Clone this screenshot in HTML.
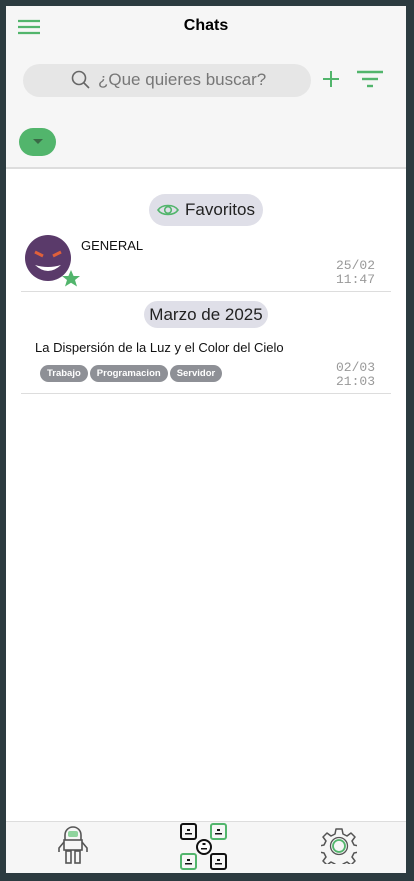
<!DOCTYPE html>
<html><head><meta charset="utf-8"><style>
*{box-sizing:border-box;margin:0;padding:0}
body{width:414px;height:881px;background:#2c3b40;font-family:"Liberation Sans",sans-serif;position:relative;overflow:hidden}
.app{position:absolute;left:6px;top:6px;width:400px;height:867px;background:#fff}
.hdr{position:absolute;left:0;top:0;width:400px;height:163px;background:#f6f6f6;border-bottom:2px solid #ddd}
.abs{position:absolute}
.pill{position:absolute;background:#dfdfe8;border-radius:16px;color:#222;font-size:17px;display:flex;align-items:center;justify-content:center}
.tag{display:inline-block;background:#8e9096;color:#fff;font-size:9.5px;font-weight:bold;border-radius:9px;padding:3px 7px;margin-right:2px}
.time{position:absolute;font-family:"Liberation Mono",monospace;font-size:13px;color:#999;line-height:14px;text-align:left}
.line{position:absolute;left:15px;width:370px;height:1px;background:#ddd}
.nav{position:absolute;left:0;top:815px;width:400px;height:52px;background:#f6f6f6;border-top:1px solid #ddd}
</style></head><body><div class="app">
<div class="hdr">
<svg class="abs" style="left:12px;top:13px" width="22" height="16"><g stroke="#52b56c" stroke-width="2.2"><line x1="0" y1="2" x2="22" y2="2"/><line x1="0" y1="8" x2="22" y2="8"/><line x1="0" y1="14" x2="22" y2="14"/></g></svg>
<div class="abs" style="left:0;width:400px;top:11px;text-align:center;font-weight:bold;font-size:16px;color:#000">Chats</div>
<div class="abs" style="left:17px;top:58px;width:288px;height:33px;background:#e6e6e6;border-radius:17px"></div>
<svg class="abs" style="left:65px;top:64px" width="20" height="20"><circle cx="8" cy="8" r="6.5" fill="none" stroke="#666" stroke-width="1.6"/><line x1="13" y1="13" x2="18" y2="18" stroke="#666" stroke-width="1.6"/></svg>
<div class="abs" style="left:92px;top:64px;font-size:17px;color:#777">¿Que quieres buscar?</div>
<svg class="abs" style="left:315px;top:63px" width="20" height="20"><g stroke="#52b56c" stroke-width="2"><line x1="10" y1="2" x2="10" y2="18"/><line x1="2" y1="10" x2="18" y2="10"/></g></svg>
<svg class="abs" style="left:351px;top:64px" width="26" height="18"><g stroke="#52b56c" stroke-width="2.4"><line x1="0" y1="2" x2="26" y2="2"/><line x1="5" y1="9" x2="21" y2="9"/><line x1="10" y1="16" x2="16" y2="16"/></g></svg>
<div class="abs" style="left:13px;top:122px;width:37px;height:28px;background:#52b56c;border-radius:14px"></div>
<svg class="abs" style="left:27px;top:133px" width="10" height="6"><path d="M0 0L10 0L5 5Z" fill="#3a6a46"/></svg>
</div>
<div class="pill" style="left:143px;top:188px;width:114px;height:32px"><svg width="22" height="14" style="margin-right:6px"><path d="M1 7C5 1 17 1 21 7C17 13 5 13 1 7Z" fill="none" stroke="#52b56c" stroke-width="1.6"/><circle cx="11" cy="7" r="3.3" fill="none" stroke="#52b56c" stroke-width="1.6"/></svg>Favoritos</div>
<svg class="abs" style="left:19px;top:229px" width="62" height="60"><circle cx="23" cy="23" r="23" fill="#5a3a6a"/><path d="M10 17l8 4M36 17l-8 4" stroke="#e0603a" stroke-width="3"/><path d="M10 30Q23 42 36 30Q23 34 10 30Z" fill="#fff"/><path d="M46 35l2.6 6 6.4 0-5 4 2 6.5-6-3.8-6 3.8 2-6.5-5-4 6.4 0z" fill="#52b56c"/></svg>
<div class="abs" style="left:75px;top:232px;font-size:13px;color:#111">GENERAL</div>
<div class="time" style="left:330px;top:253px">25/02<br>11:47</div>
<div class="line" style="top:285px"></div>
<div class="pill" style="left:138px;top:295px;width:124px;height:27px">Marzo de 2025</div>
<div class="abs" style="left:29px;top:334px;font-size:13px;color:#111">La Dispersión de la Luz y el Color del Cielo</div>
<div class="abs" style="left:34px;top:357px;white-space:nowrap"><span class="tag">Trabajo</span><span class="tag">Programacion</span><span class="tag">Servidor</span></div>
<div class="time" style="left:330px;top:355px">02/03<br>21:03</div>
<div class="line" style="top:387px"></div>
<div class="nav">
<svg class="abs" style="left:50px;top:4px" width="34" height="40"><g fill="none" stroke="#555" stroke-width="1.6"><path d="M9 14V9a8 8 0 0 1 16 0v5"/><rect x="8" y="14" width="18" height="10"/><path d="M8 16l-5 6v4M26 16l5 6v4"/><rect x="10" y="25" width="5" height="12"/><rect x="19" y="25" width="5" height="12"/></g><rect x="12" y="5" width="10" height="6" rx="2" fill="#8fd49d"/></svg>
<svg class="abs" style="left:174px;top:1px" width="52" height="48"><g fill="none" stroke-width="2"><rect x="1" y="1" width="15" height="15" rx="2" stroke="#111"/><rect x="31" y="1" width="15" height="15" rx="2" stroke="#52b56c"/><rect x="1" y="31" width="15" height="15" rx="2" stroke="#52b56c"/><rect x="31" y="31" width="15" height="15" rx="2" stroke="#111"/><circle cx="24" cy="24" r="7" stroke="#111" fill="#fff"/></g><g fill="#111"><rect x="7" y="6" width="3" height="2"/><rect x="5" y="10" width="7" height="1.5"/><rect x="37" y="6" width="3" height="2"/><rect x="35" y="10" width="7" height="1.5"/><rect x="7" y="36" width="3" height="2"/><rect x="5" y="40" width="7" height="1.5"/><rect x="37" y="36" width="3" height="2"/><rect x="35" y="40" width="7" height="1.5"/><rect x="22.5" y="20" width="3" height="2"/><rect x="21" y="25" width="6" height="1.5"/></g></svg>
<svg class="abs" style="left:315px;top:6px" width="36" height="36"><path d="M15 1h6l1 5 4 2 4-3 4 4-3 4 2 4 5 1v6l-5 1-2 4 3 4-4 4-4-3-4 2-1 5h-6l-1-5-4-2-4 3-4-4 3-4-2-4-5-1v-6l5-1 2-4-3-4 4-4 4 3 4-2z" fill="none" stroke="#555" stroke-width="1.5" stroke-linejoin="round"/><circle cx="18" cy="18" r="6" fill="none" stroke="#52b56c" stroke-width="1.8"/><circle cx="18" cy="18" r="8.5" fill="none" stroke="#555" stroke-width="1.3"/></svg>
</div>
</div></body></html>
